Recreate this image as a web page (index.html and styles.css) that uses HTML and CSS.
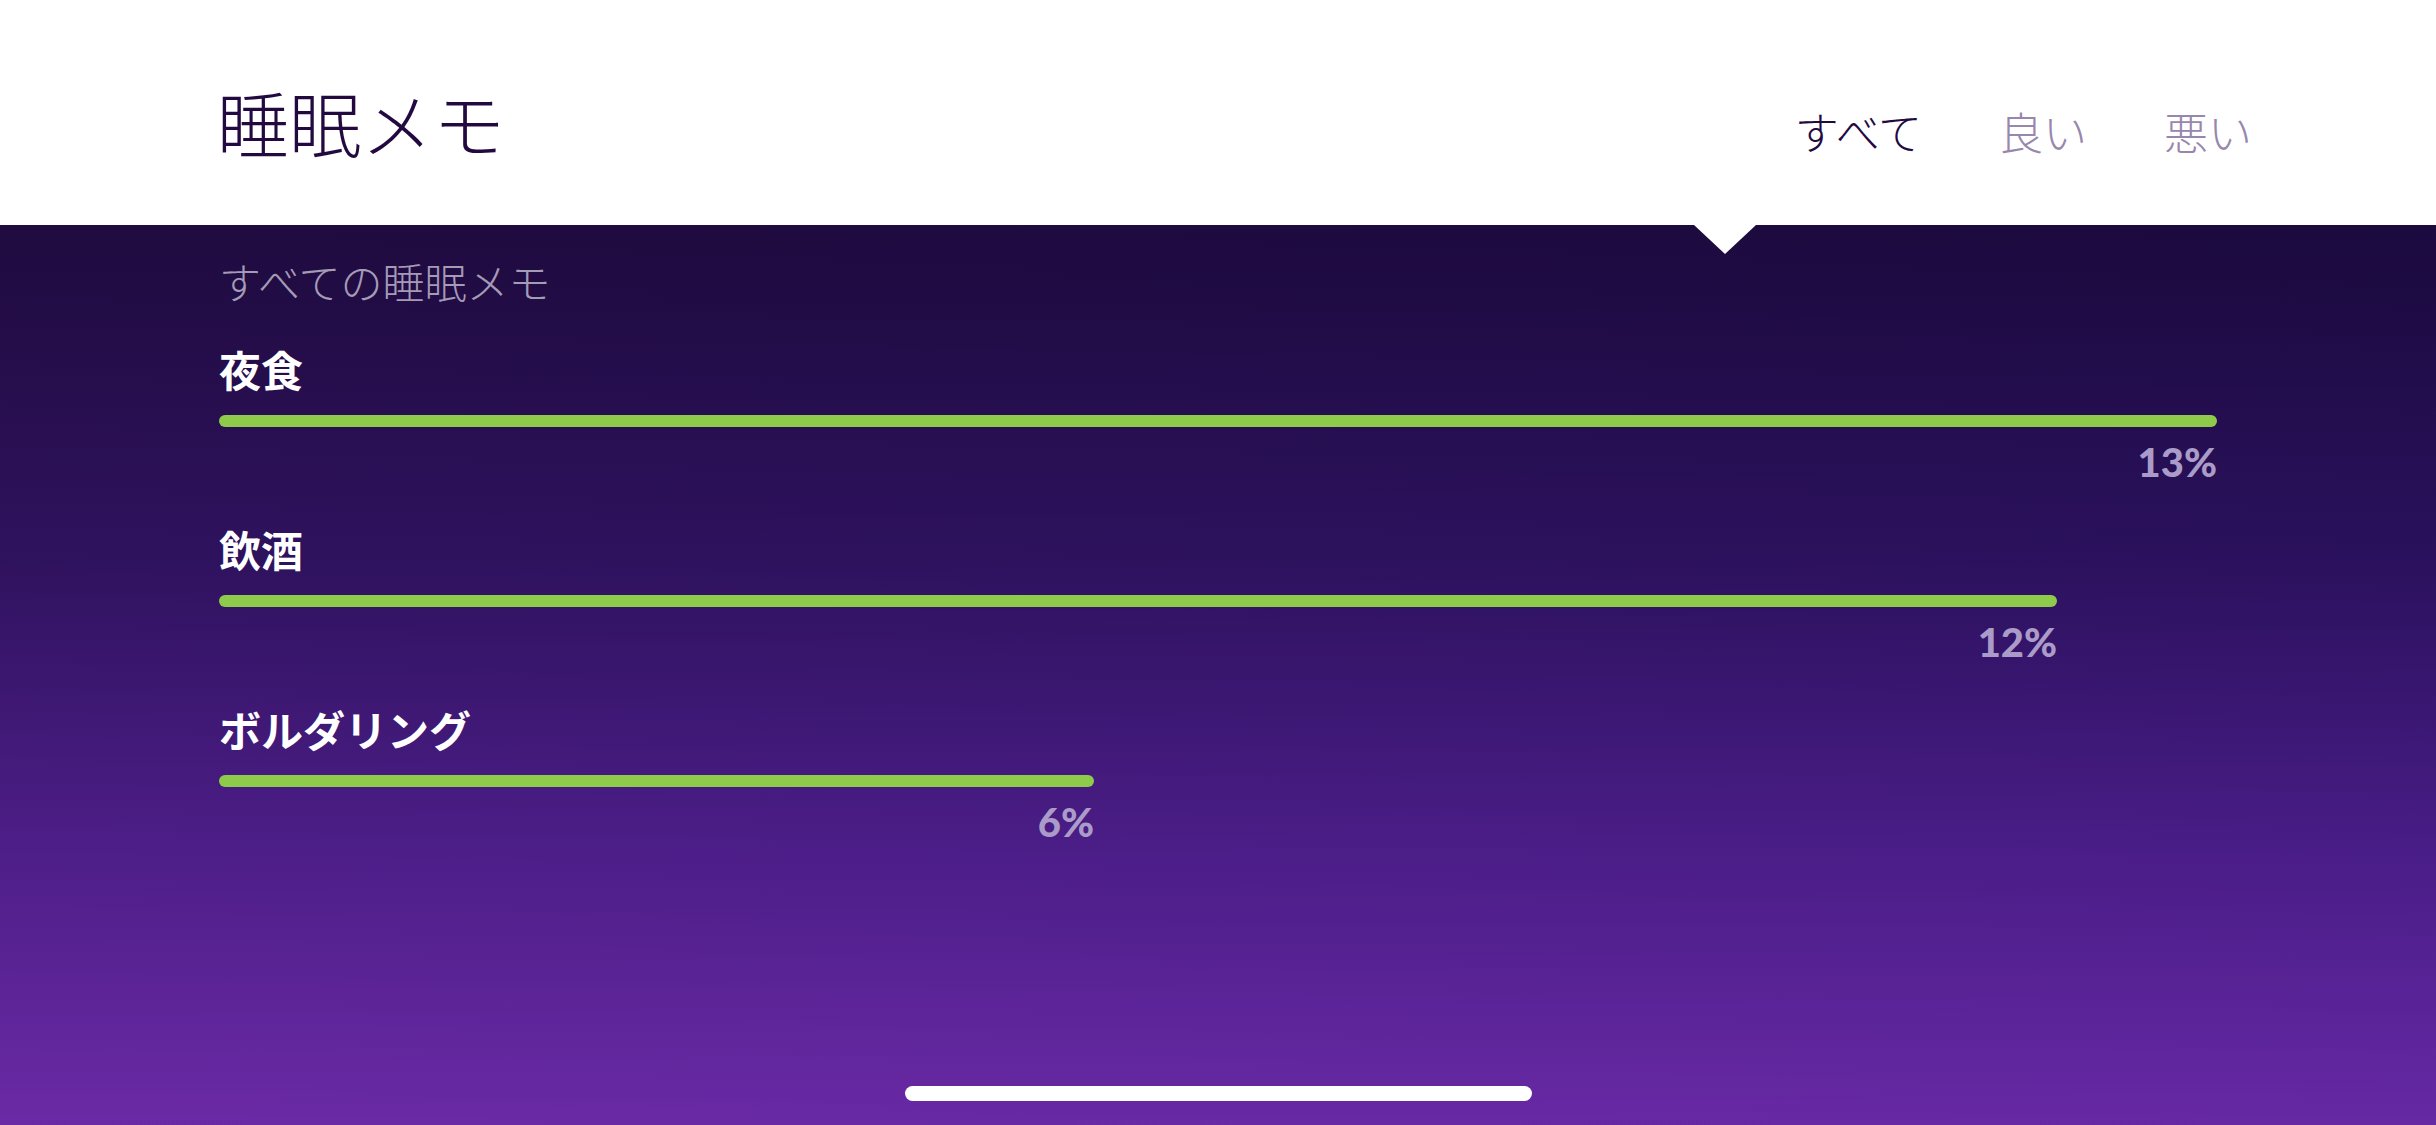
FILE: index.html
```html
<!DOCTYPE html>
<html lang="ja">
<head>
    <meta charset="UTF-8">
    <meta name="viewport" content="width=device-width, initial-scale=1.0">
    <title>睡眠メモ</title>
    <link rel="stylesheet" href="styles.css">
</head>
<body>
<div class="page">
    <header class="top-bar">
        <h1 class="title">睡眠メモ</h1>
        <nav class="tabs">
            <span class="tab active">すべて</span>
            <span class="tab">良い</span>
            <span class="tab">悪い</span>
        </nav>
    </header>

    <main class="content">
        <p class="section-label">すべての睡眠メモ</p>

        <div class="memo-list">
            <div class="memo">
                <div class="memo-name">夜食</div>
                <div class="memo-value" style="width: 100%">
                    <div class="bar"></div>
                    <div class="percent">13%</div>
                </div>
            </div>
            <div class="memo">
                <div class="memo-name">飲酒</div>
                <div class="memo-value" style="width: 92%">
                    <div class="bar"></div>
                    <div class="percent">12%</div>
                </div>
            </div>
            <div class="memo">
                <div class="memo-name">ボルダリング</div>
                <div class="memo-value" style="width: 43.8%">
                    <div class="bar"></div>
                    <div class="percent">6%</div>
                </div>
            </div>
        </div>
    </main>

    <div class="home-indicator"></div>
</div>
</body>
</html>
```

FILE: styles.css
```css
:root {
    --ink: #22093f;
    --tab-muted: #9787ad;
    --label-muted: #a49bb7;
    --percent: #aa9bc8;
    --bar-green: #8fcb4a;
}

* {
    box-sizing: border-box;
}

html, body {
    margin: 0;
    padding: 0;
}

body {
    font-family: "Noto Sans CJK JP", "Noto Sans", sans-serif;
    background-color: #170830;
}

.page {
    position: relative;
    min-height: 100vh;
    display: flex;
    flex-direction: column;
    background:
        linear-gradient(to right, rgba(120, 40, 170, 0.06), rgba(40, 20, 150, 0.06)),
        linear-gradient(to bottom, #150729 0%, #1c0a3d 25%, #2b115a 50%, #4a1d85 75%, #6a2aa5 100%);
}

/* header */

.top-bar {
    position: relative;
    height: 225px;
    padding: 16px 184px 0 217px;
    background-color: #fff;
    display: flex;
    justify-content: space-between;
    align-items: center;
}

.top-bar::after {
    content: "";
    position: absolute;
    left: 1694px;
    top: 225px;
    border-left: 31px solid transparent;
    border-right: 31px solid transparent;
    border-top: 29px solid #fff;
}

.title {
    margin: 0;
    font-size: 72px;
    line-height: 1;
    font-weight: 300;
    color: var(--ink);
}

.tabs {
    display: flex;
    gap: 77px;
    margin-top: 20px;
}

.tab {
    font-size: 44px;
    line-height: 1;
    font-weight: 300;
    color: var(--tab-muted);
}

.tab.active {
    color: var(--ink);
}

/* list */

.content {
    flex: 1;
    padding: 35px 219px 0 219px;
}

.section-label {
    margin: 0;
    font-size: 42px;
    line-height: 1;
    font-weight: 300;
    color: var(--label-muted);
}

.memo-list {
    width: 1998px;
    margin-top: 46px;
    display: flex;
    flex-direction: column;
    gap: 46.5px;
}

.memo-name {
    font-size: 42px;
    line-height: 1;
    font-weight: 700;
    color: #fff;
}

.memo-value {
    margin-top: 25px;
}

.bar {
    height: 12px;
    border-radius: 6px;
    background-color: var(--bar-green);
}

.percent {
    margin-top: 14.5px;
    text-align: right;
    font-family: Lato, "Noto Sans", sans-serif;
    font-size: 40px;
    line-height: 1;
    font-weight: 900;
    color: var(--percent);
}

.home-indicator {
    position: absolute;
    left: 50%;
    bottom: 24px;
    width: 627px;
    height: 15px;
    margin-left: -313px;
    border-radius: 8px;
    background-color: #fff;
}
```
